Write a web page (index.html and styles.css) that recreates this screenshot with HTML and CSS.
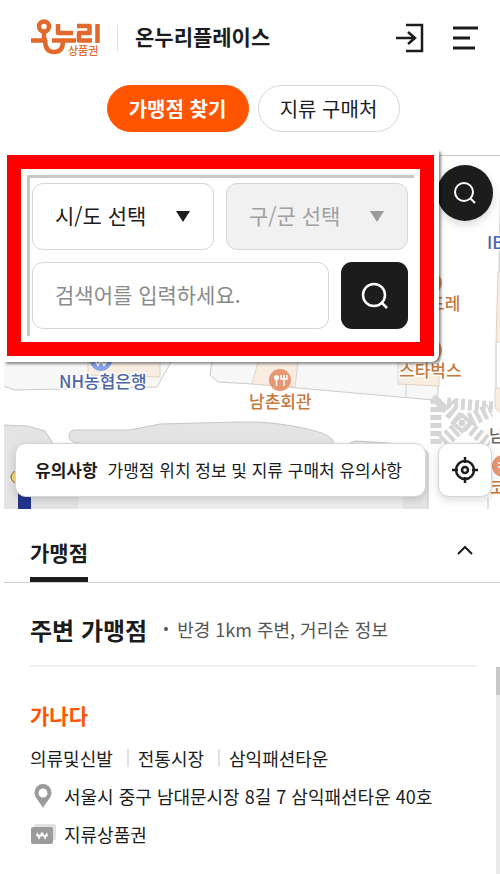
FILE: index.html
```html
<!DOCTYPE html>
<html lang="ko">
  <head>
    <meta charset="UTF-8" />
    <meta name="viewport" content="width=device-width, initial-scale=1.0" />
    <title>온누리플레이스</title>
    <link rel="stylesheet" href="styles.css">
  </head>
  <body>
    <header class="header">
      <a class="logo" href="#">
        <svg width="70" height="38" viewBox="30 19 70 38">
          <g fill="none" stroke="#e2692b" stroke-width="4.500">
            <circle cx="44" cy="26.500" r="5" />
            <path d="M44 31v9M31 40.500h16" />
            <path d="M45 40c0 8 3 12 9 12s9-4 9-11" />
            <path d="M58 24v9h15M52 40.500h24" stroke-linejoin="round" />
            <path d="M77 26h12.500v7h-10.500v7.500h13" stroke-linejoin="round" />
            <path d="M97.500 24v19" />
          </g>
          <text class="logo-text" x="68" y="55">상품권</text>
        </svg>
      </a>
      <h1 class="site-name">온누리플레이스</h1>
      <button class="icon-button" type="button" aria-label="로그인">
        <svg width="28" height="30" viewBox="0 0 28 30" fill="none" stroke="#1c1c1c" stroke-width="2.500">
          <path d="M10 2h16v26H10M0 15h19M12 9l7 6-7 6" />
        </svg>
      </button>
      <button class="icon-button" type="button" aria-label="메뉴">
        <svg width="26" height="30" viewBox="0 0 26 30" fill="none" stroke="#1c1c1c" stroke-width="3">
          <path d="M1 5h25M1 15h17M1 25h22" />
        </svg>
      </button>
    </header>

    <nav class="pills">
      <a class="pill pill-active" href="#">가맹점 찾기</a>
      <a class="pill" href="#">지류 구매처</a>
    </nav>

    <main class="main">
      <section class="map">
        <svg class="map-canvas" viewBox="4 155 496 354" preserveAspectRatio="xMinYMin slice">
          <rect x="4" y="155" width="496" height="354" fill="#fff" />
          <!-- blocks -->
          <g fill="#f7f7f7" stroke="#cdcbc4">
            <path d="M3 300v86l12 4 142-3 18-32v-55z" />
            <path d="M213 355l-3 20 8 7 35 2 180 16 5-6v-40z" />
            <path d="M406 355v42" />
          </g>
          <g fill="#e4e4e4" stroke="#c9c7bd">
            <path d="M3 425l25 1 17 5 9 14v45h26l-3 20H3z" />
            <path d="M80 470v-27q-11 0-11-7 0-6 7-6h54l30-6 80-2h18q35 2 64 11 14 6 11 12v25z" />
            <path d="M350 443l6-2 62 4 10 8v57h-78z" />
          </g>
          <path d="M80 480h323v30H77z" fill="#eee" />
          <!-- buildings -->
          <g fill="#f9ece1" stroke="#ddd3c8">
            <path d="M88 350h72v27l-72-2z" />
            <path d="M260 355l-8 29 43 3 4-32z" />
            <path d="M398 350v34l41 2v-36z" />
            <path d="M505 272h-7l-2 70h9z" />
            <path d="M505 388h-10v20l10 9z" />
          </g>
          <path d="M501 165l-2 107M440 155.500h60M496 342v46M488 498v12" stroke="#c4c4c4" fill="none" />
          <!-- crossing -->
          <g fill="none" stroke="#d6d6d6">
            <path d="M436 399v46" stroke-width="11" stroke-dasharray="5 3" />
            <path d="M447 403l46 4" stroke-width="11" stroke-dasharray="4 3" />
            <path d="M433 397l13 13" stroke-width="8" />
            <path d="M443 412l12-12M446 417l12-12" stroke-width="3" />
            <path d="M443 442l19-18 28-14" stroke-width="14" stroke-dasharray="4 3" />
            <path d="M450 412l40 32" stroke-width="12" stroke-dasharray="4 3" />
            <path d="M462 415l9 8-9 8-9-8z" stroke-width="4" fill="#fff" />
            <circle cx="462" cy="423" r="3" fill="#d6d6d6" />
          </g>
          <!-- pins -->
          <circle cx="101" cy="360" r="11" fill="#86a4ea" />
          <path d="M95 361l3 4 3-4 3 4 3-4" stroke="#fff" stroke-width="2" fill="none" />
          <g fill="#e99773">
            <circle cx="280" cy="380" r="11" />
            <circle cx="431" cy="283" r="11" />
            <circle cx="431" cy="350" r="11" />
            <circle cx="503" cy="466" r="11" />
          </g>
          <path d="M276.500 379v7M284 378v8M281 375v4h6v-4M284 375v4" stroke="#fff" stroke-width="1.500" fill="none" />
          <circle cx="276.500" cy="377.500" r="2.500" fill="#fff" />
          <path d="M498 463h4M498 467h4" stroke="#fff" stroke-width="1.500" />
          <circle cx="17" cy="477" r="6" fill="#f5d778" stroke="#776a43" />
          <path d="M18 490h13v20H18z" fill="#22358c" />
          <g class="map-labels">
            <text class="bank" x="59" y="388">NH농협은행</text>
            <text class="bank" x="487" y="249">IB</text>
            <text class="food" x="249" y="408">남촌회관</text>
            <text class="food" x="399" y="377">스타벅스</text>
            <text class="food" x="429" y="310">드레</text>
            <text class="food" x="490" y="494">코</text>
            <text class="place" x="489" y="442">남</text>
          </g>
        </svg>

        <button class="round-search" type="button" aria-label="지도 검색">
          <svg width="24" height="24" viewBox="0 0 24 24" fill="none" stroke="#fff" stroke-width="2">
            <circle cx="11" cy="11" r="9" />
            <path d="M17 17l5 5" />
          </svg>
        </button>

        <form class="search-panel">
          <div class="search-frame">
            <div class="search-fields">
              <div class="row">
                <label class="select-box">
                  <select aria-label="시/도 선택">
                    <option>시/도 선택</option>
                  </select>
                </label>
                <label class="select-box select-disabled">
                  <select aria-label="구/군 선택" disabled>
                    <option>구/군 선택</option>
                  </select>
                </label>
              </div>
              <div class="row">
                <input class="keyword" type="text" aria-label="검색어" placeholder="검색어를 입력하세요.">
                <button class="search-button" type="button" aria-label="검색">
                  <svg width="28" height="28" viewBox="0 0 28 28" fill="none" stroke="#fff" stroke-width="2.500">
                    <circle cx="13" cy="13" r="11" />
                    <path d="M20 20l6 6" />
                  </svg>
                </button>
              </div>
            </div>
          </div>
        </form>

        <div class="map-bottom">
          <a class="notice" href="#"><strong>유의사항</strong>가맹점 위치 정보 및 지류 구매처 유의사항</a>
          <button class="locate" type="button" aria-label="현재 위치">
            <svg width="26" height="26" viewBox="0 0 26 26" fill="none" stroke="#1c1c1c" stroke-width="2.500">
              <circle cx="13" cy="13" r="9" />
              <circle cx="13" cy="13" r="3" />
              <path d="M13 0v6M13 20v6M0 13h6M20 13h6" />
            </svg>
          </button>
        </div>
      </section>

      <div class="tab-bar">
        <button class="tab" type="button">가맹점</button>
        <button class="icon-button" type="button" aria-label="접기">
          <svg width="16" height="10" viewBox="0 0 16 10" fill="none" stroke="#1c1c1c" stroke-width="2">
            <path d="M1 9l7-7 7 7" />
          </svg>
        </button>
      </div>

      <section class="list">
        <div class="list-head">
          <h2>주변 가맹점</h2>
          <p>반경 1km 주변, 거리순 정보</p>
        </div>
        <div class="list-body">
          <article class="store">
            <h3>가나다</h3>
            <ul class="category">
              <li>의류및신발</li>
              <li>전통시장</li>
              <li>삼익패션타운</li>
            </ul>
            <p class="info">
              <svg width="26" height="24" viewBox="0 0 26 24" fill="#9b9b9b">
                <path fill-rule="evenodd" d="M13 0a8.500 8.500 0 0 0-8.500 8.500C4.500 14 10 18 13 24c3-6 8.500-10 8.500-15.500A8.500 8.500 0 0 0 13 0zm0 4.500a4.500 4.500 0 1 1 0 9 4.500 4.500 0 0 1 0-9z" />
              </svg>
              서울시 중구 남대문시장 8길 7 삼익패션타운 40호
            </p>
            <p class="info">
              <svg width="26" height="20" viewBox="0 0 26 20">
                <rect x="4" y="0" width="22" height="16" rx="2" fill="#e2e2e2" />
                <rect x="1" y="3" width="22" height="17" rx="2" fill="#9b9b9b" />
                <path d="M7 9l2 5 3-5 3 5 2-5M6 11.500h12" fill="none" stroke="#fff" stroke-width="1.500" />
              </svg>
              지류상품권
            </p>
          </article>
          <div class="scroll-track"><div class="scroll-thumb"></div></div>
        </div>
      </section>
    </main>
  </body>
</html>
```

FILE: styles.css
```css
* {
  box-sizing: border-box;
}
body {
  font-family: "Noto Sans CJK KR", "Noto Sans", sans-serif;
  margin: 0;
  padding-left: 4px;
  display: flex;
  flex-direction: column;
  min-height: 100vh;
  background-color: #fff;
  color: #1c1c1c;
}
button,
input,
select {
  font-family: inherit;
  margin: 0;
}
button {
  cursor: pointer;
}
a {
  color: inherit;
  text-decoration: none;
}
svg {
  display: block;
  flex-shrink: 0;
}
h1,
h2,
h3,
p,
ul {
  margin: 0;
  padding: 0;
}
.header {
  display: flex;
  align-items: center;
  gap: 28px;
  height: 76px;
  padding: 0 22px 0 26px;
}
.logo-text {
  font-size: 11px;
  font-weight: 500;
  fill: #e2692b;
}
.site-name {
  flex: 1;
  margin-left: -11px;
  padding: 0 0 3px 17px;
  border-left: 1px solid #e0e0e0;
  font-size: 21px;
  line-height: 23px;
}
.icon-button {
  padding: 0;
  border: none;
  background: none;
}
.pills {
  display: flex;
  justify-content: center;
  gap: 9px;
  padding: 9px 0 23px 2px;
}
.pill {
  width: 142px;
  border: 1px solid #d6d6d6;
  border-radius: 24px;
  font-size: 20px;
  line-height: 45px;
  text-align: center;
}
.pill-active {
  border-color: #ff5500;
  background-color: #ff5500;
  color: #fff;
  font-weight: bold;
}
.main {
  flex: 1;
  display: flex;
  flex-direction: column;
}

/* map */
.map {
  position: relative;
  height: 354px;
}
.map-canvas {
  width: 100%;
  height: 100%;
}
.map-labels {
  font-size: 17px;
  font-weight: 500;
  paint-order: stroke;
  stroke: #fff;
  stroke-width: 3px;
}
.bank {
  fill: #4c66a8;
}
.food {
  fill: #c5783c;
}
.place {
  fill: #666;
}
.round-search {
  position: absolute;
  top: 10px;
  right: 7px;
  display: flex;
  align-items: center;
  justify-content: center;
  width: 56px;
  height: 56px;
  border: none;
  border-radius: 50%;
  background-color: #1c1c1c;
  box-shadow: 0 4px 10px rgba(0, 0, 0, 0.15);
}
.search-panel {
  position: absolute;
  top: -5px;
  left: 0;
  right: 61px;
  padding: 5px 5px 6px 3px;
  border-radius: 0 0 8px 0;
  background-color: #fff;
  box-shadow: 2px 2px 3px rgba(0, 0, 0, 0.45);
  clip-path: inset(0 -6px -6px 0);
}
.search-frame {
  padding: 6px;
  border: 14px solid #ff0000;
}
.search-fields {
  display: flex;
  flex-direction: column;
  gap: 12px;
  padding: 5px 6px 7px 2px;
  border-top: 3px solid #c8c8c8;
  border-left: 3px solid #c8c8c8;
}
.row {
  display: flex;
  gap: 12px;
}
.select-box {
  position: relative;
  flex: 1;
}
.select-box::after {
  content: "";
  position: absolute;
  top: 28px;
  right: 24px;
  border: 7px solid transparent;
  border-top: 11px solid #1c1c1c;
  border-bottom: none;
  pointer-events: none;
}
.select-disabled::after {
  border-top-color: #9b9b9b;
}
select,
.keyword {
  width: 100%;
  height: 67px;
  padding: 0 22px 4px;
  border: 1px solid #d6d6d6;
  border-radius: 11px;
  background-color: #fff;
  color: #1c1c1c;
  font-size: 21px;
  appearance: none;
}
select:disabled {
  background-color: #f1f1f1;
  color: #a0a0a0;
  opacity: 1;
}
.keyword {
  flex: 1;
  min-width: 0;
}
.keyword::placeholder {
  color: #8a8a8a;
}
.search-button {
  display: flex;
  align-items: center;
  justify-content: center;
  width: 67px;
  height: 67px;
  border: none;
  border-radius: 11px;
  background-color: #1c1c1c;
}
.map-bottom {
  position: absolute;
  left: 11px;
  right: 8px;
  bottom: 12px;
  display: flex;
  gap: 12px;
}
.notice,
.locate {
  height: 54px;
  border: 1px solid #d6d6d6;
  border-radius: 11px;
  background-color: #fff;
  box-shadow: 0 3px 8px rgba(0, 0, 0, 0.15);
}
.notice {
  flex: 1;
  padding-left: 19px;
  font-size: 17px;
  line-height: 52px;
  white-space: nowrap;
}
.notice strong {
  margin-right: 10px;
}
.locate {
  display: flex;
  align-items: center;
  justify-content: center;
  width: 54px;
  padding: 0;
}

/* store list */
.tab-bar {
  display: flex;
  align-items: center;
  justify-content: space-between;
  height: 74px;
  padding: 0 27px 0 26px;
  border-bottom: 1px solid #d0d0d0;
}
.tab {
  align-self: flex-end;
  height: 56px;
  padding: 0;
  border: none;
  border-bottom: 5px solid #1c1c1c;
  background: none;
  color: #1c1c1c;
  font-size: 21px;
  font-weight: bold;
}
.tab-bar .icon-button {
  padding-top: 8px;
}
.list {
  flex: 1;
  display: flex;
  flex-direction: column;
}
.list-head {
  display: flex;
  align-items: center;
  height: 84px;
  margin: 0 23px 0 26px;
  padding-top: 10px;
  border-bottom: 2px solid #efefef;
}
.list-head h2 {
  font-size: 24px;
}
.list-head p {
  display: flex;
  align-items: center;
  gap: 9px;
  margin-left: 17px;
  color: #555;
  font-size: 18px;
}
.list-head p::before {
  content: "";
  width: 4px;
  height: 4px;
  border-radius: 50%;
  background-color: #555;
}
.list-body {
  flex: 1;
  display: flex;
}
.store {
  flex: 1;
  padding: 32px 22px 0 26px;
}
.store h3 {
  color: #ff5500;
  font-size: 21px;
  line-height: 32px;
}
.category {
  display: flex;
  gap: 14px;
  margin-top: 8px;
  font-size: 18px;
  line-height: 38px;
  list-style: none;
}
.category li {
  display: flex;
  align-items: center;
  gap: 9px;
}
.category li + li::before {
  content: "";
  width: 2px;
  height: 18px;
  background-color: #e2e2e2;
}
.info {
  display: flex;
  align-items: center;
  gap: 8px;
  font-size: 18px;
  line-height: 38px;
  white-space: nowrap;
}
.scroll-track {
  width: 4px;
  background-color: #e9e9e9;
}
.scroll-thumb {
  height: 28px;
  background-color: #c8c8c8;
}
```
